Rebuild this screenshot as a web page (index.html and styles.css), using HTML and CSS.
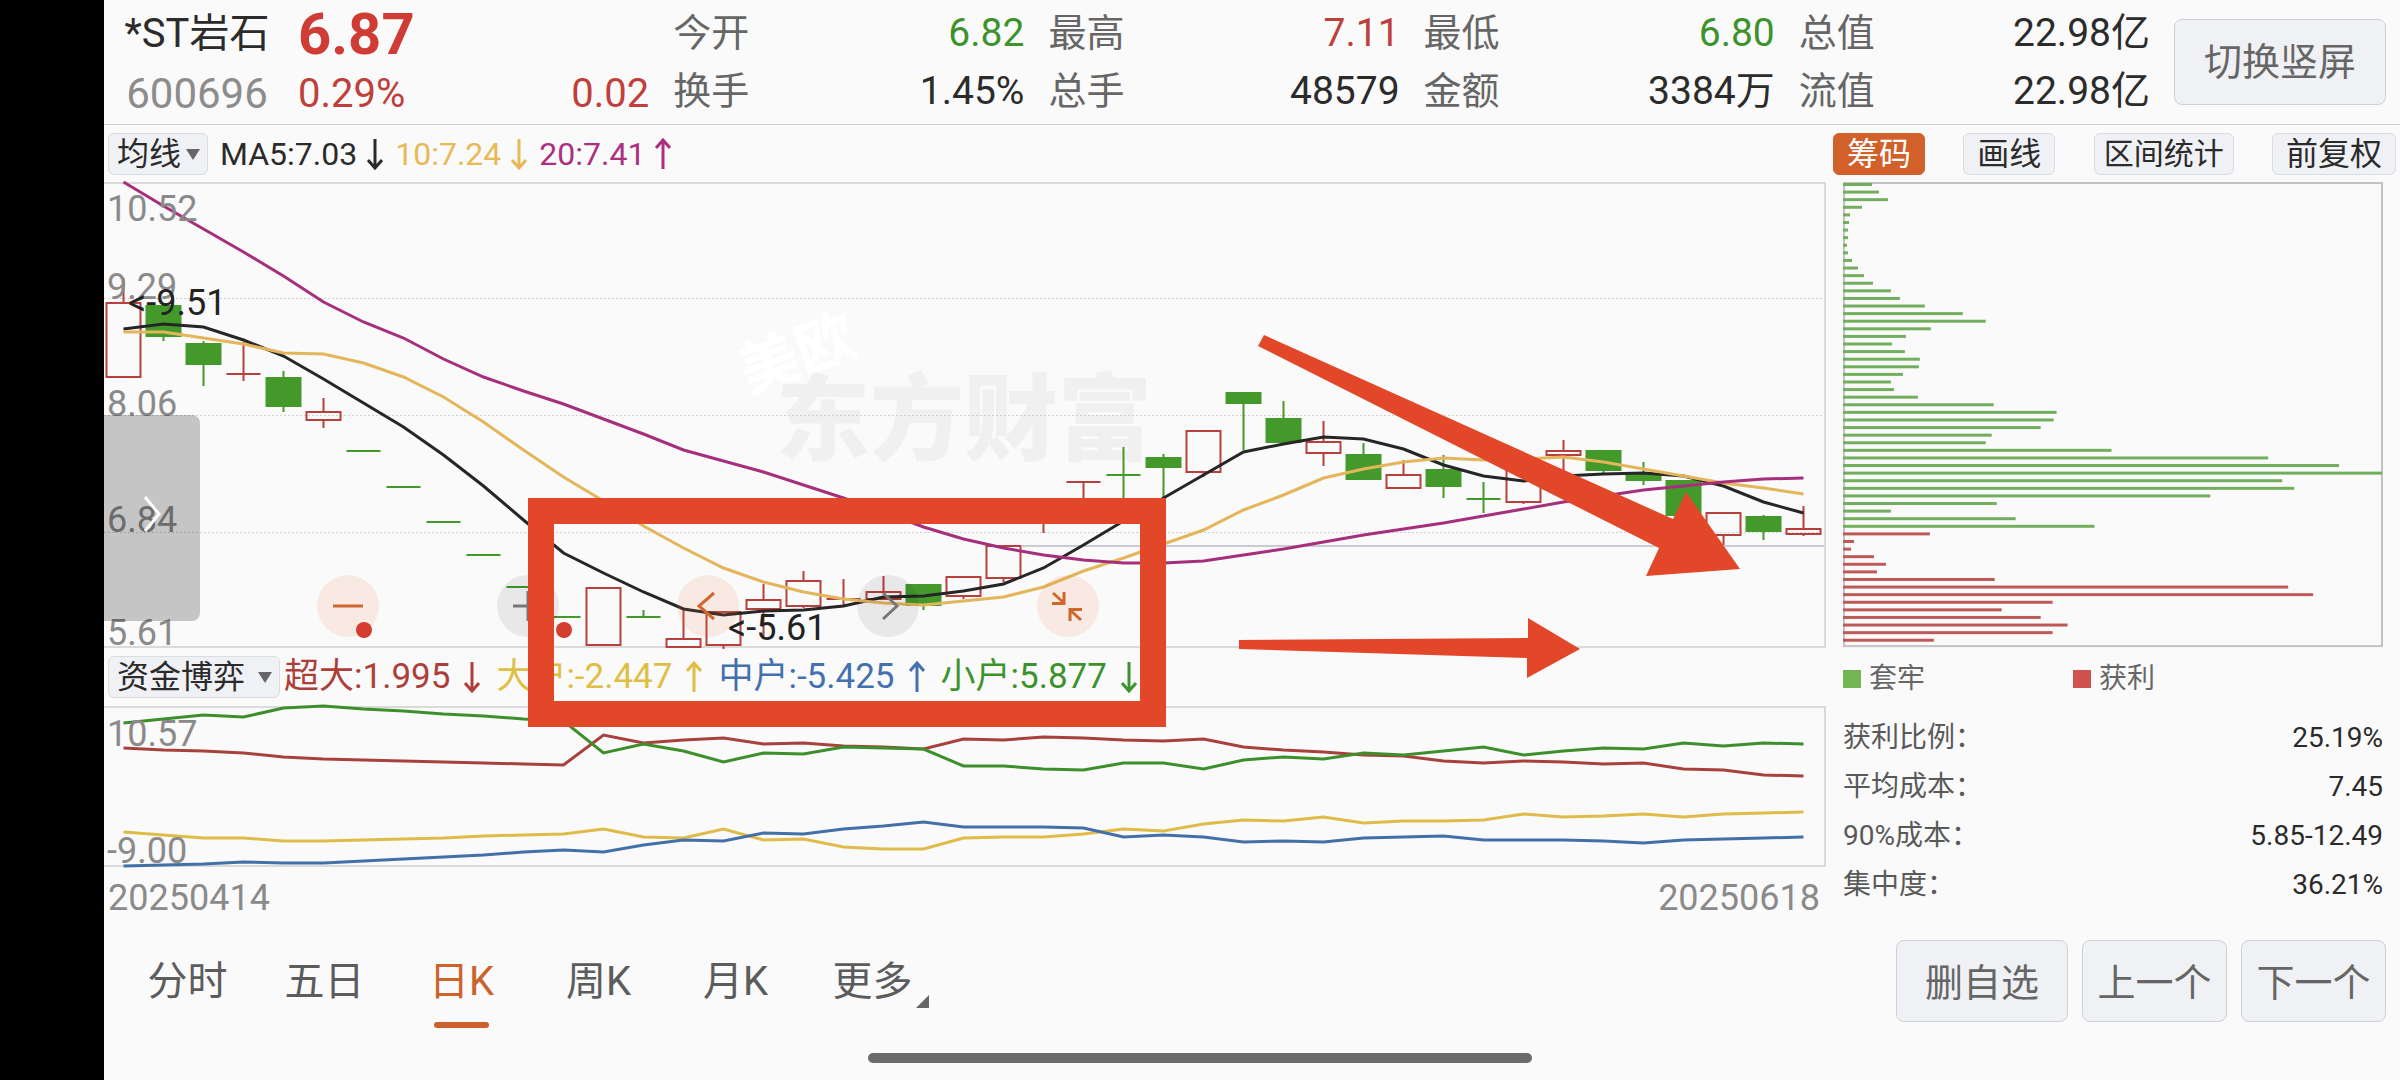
FILE: index.html
```html
<!DOCTYPE html>
<html lang="zh-CN">
<head>
    <meta charset="UTF-8">
    <meta name="viewport" content="width=device-width, initial-scale=1.0">
    <title>*ST岩石 600696</title>
    <link rel="stylesheet" href="styles.css">
</head>
<body>
    <svg class="defs" aria-hidden="true">
        <symbol id="arrow-down" viewBox="0 0 16 32"><path d="M8 1V30M1 22L8 30L15 22"/></symbol>
        <symbol id="arrow-up" viewBox="0 0 16 32"><path d="M8 31V2M1 10L8 2L15 10"/></symbol>
    </svg>

    <div class="notch"></div>
    <main class="screen">
        <header class="quote">
            <div class="stock">
                <h1 class="stock-name">*ST岩石</h1>
                <div class="stock-code">600696</div>
            </div>
            <div class="pair price">
                <strong class="last up">6.87</strong>
                <div class="change up"><span>0.29%</span><span>0.02</span></div>
            </div>
            <dl class="pair">
                <dt>今开</dt><dd class="down">6.82</dd>
                <dt>换手</dt><dd>1.45%</dd>
            </dl>
            <dl class="pair">
                <dt>最高</dt><dd class="up">7.11</dd>
                <dt>总手</dt><dd>48579</dd>
            </dl>
            <dl class="pair">
                <dt>最低</dt><dd class="down">6.80</dd>
                <dt>金额</dt><dd>3384万</dd>
            </dl>
            <dl class="pair">
                <dt>总值</dt><dd>22.98亿</dd>
                <dt>流值</dt><dd>22.98亿</dd>
            </dl>
            <button class="btn btn-rotate">切换竖屏</button>
        </header>

        <div class="content">
            <section class="charts">
                <div class="bar">
                    <span class="picker">
                        <select class="picker-ma" aria-label="主图指标"><option>均线</option></select>
                    </span>
                    <span class="ma ma5">MA5:7.03<svg class="arrow"><use href="#arrow-down"/></svg></span>
                    <span class="ma ma10">10:7.24<svg class="arrow"><use href="#arrow-down"/></svg></span>
                    <span class="ma ma20">20:7.41<svg class="arrow"><use href="#arrow-up"/></svg></span>
                </div>

                <div class="price-chart">
                    <svg class="plot" viewBox="104 182 1722 466">
                        <text class="brand" x="776" y="453">东方财富</text>
                        <text class="stamp" x="748" y="394" transform="rotate(-20 748 394)">美欧</text>
                        <path class="grid" d="M104 298.5H1825M104 415.5H1825M104 532.5H1825"/>
                        <path class="last-line" d="M1022 546H1825"/>
                        <path class="frame" d="M104 183H1825V647H104"/>
                        <g id="candles"></g>
                        <g id="averages"></g>
                        <g class="axis">
                            <text x="107" y="221">10.52</text>
                            <text x="107" y="299">9.29</text>
                            <text x="107" y="416">8.06</text>
                            <text x="107" y="532">6.84</text>
                            <text x="107" y="645">5.61</text>
                        </g>
                        <g class="extreme">
                            <text x="128" y="315">&lt;-9.51</text>
                            <text x="728" y="640">&lt;-5.61</text>
                        </g>
                    </svg>
                    <button class="drawer" aria-label="展开">
                        <svg viewBox="0 0 18 38"><path d="M2 2L16 19L2 36"/></svg>
                    </button>
                    <div class="tools">
                        <button class="tool dot" aria-label="缩小"><svg viewBox="0 0 62 62"><path d="M16 31H46"/></svg></button>
                        <button class="tool grey dot" aria-label="放大"><svg viewBox="0 0 62 62"><path d="M16 31H46M31 16V46"/></svg></button>
                        <button class="tool" aria-label="左移"><svg viewBox="0 0 62 62"><path d="M37 18L22 31L37 44"/></svg></button>
                        <button class="tool grey" aria-label="右移"><svg viewBox="0 0 62 62"><path d="M26 18L40 31L26 44"/></svg></button>
                        <button class="tool" aria-label="收起"><svg viewBox="0 0 62 62"><path d="M16 18L27 28M27 17V28.500H15M44 45L33 35M33 46V34.500H45"/></svg></button>
                    </div>
                </div>

                <div class="bar">
                    <span class="picker">
                        <select class="picker-fund" aria-label="副图指标"><option>资金博弈</option></select>
                    </span>
                    <span class="fund fund-xl">超大:1.995<svg class="arrow"><use href="#arrow-down"/></svg></span>
                    <span class="fund fund-l">大户:-2.447<svg class="arrow"><use href="#arrow-up"/></svg></span>
                    <span class="fund fund-m">中户:-5.425<svg class="arrow"><use href="#arrow-up"/></svg></span>
                    <span class="fund fund-s">小户:5.877<svg class="arrow"><use href="#arrow-down"/></svg></span>
                </div>

                <svg class="plot" viewBox="104 706 1722 161">
                    <path class="frame" d="M104 707H1825V866H104"/>
                    <g id="funds"></g>
                    <g class="axis">
                        <text x="107" y="746">10.57</text>
                        <text x="107" y="863">-9.00</text>
                    </g>
                </svg>

                <div class="dates"><span>20250414</span><span>20250618</span></div>

                <!-- hand-drawn marks over both charts -->
                <svg class="marks" viewBox="104 125 1722 742">
                    <rect x="541" y="511" width="612" height="203"/>
                    <path d="M1264 335L1673 519L1686 492L1740 569L1646 576L1659 548L1258 346Z"/>
                    <path d="M1239 640L1528 638V618L1580 649L1527 678V658L1239 649Z"/>
                </svg>
            </section>

            <aside class="chips">
                <nav class="chip-tabs">
                    <button class="chip-tab active">筹码</button>
                    <button class="chip-tab">画线</button>
                    <button class="chip-tab small">区间统计</button>
                    <button class="chip-tab">前复权</button>
                </nav>
                <div class="chip-body">
                    <svg class="plot" id="chips" viewBox="0 0 541 466">
                        <rect class="chip-frame" x="1" y="1" width="539" height="464"/>
                    </svg>
                    <div class="legend">
                        <span class="trapped">套牢</span>
                        <span class="profit">获利</span>
                    </div>
                    <dl class="stats">
                        <dt>获利比例：</dt><dd>25.19%</dd>
                        <dt>平均成本：</dt><dd>7.45</dd>
                        <dt>90%成本：</dt><dd>5.85-12.49</dd>
                        <dt>集中度：</dt><dd>36.21%</dd>
                    </dl>
                </div>
            </aside>
        </div>

        <footer class="footer">
            <nav class="tabs">
                <button class="tab">分时</button>
                <button class="tab">五日</button>
                <button class="tab active">日K</button>
                <button class="tab">周K</button>
                <button class="tab">月K</button>
                <button class="tab more">更多</button>
            </nav>
            <div class="actions">
                <button class="btn btn-wide">删自选</button>
                <button class="btn">上一个</button>
                <button class="btn">下一个</button>
            </div>
        </footer>
        <div class="home"></div>
    </main>
    <script src="charts.js"></script>
</body>
</html>
```
FILE: styles.css
```css
* {
    box-sizing: border-box;
}

body {
    margin: 0;
    min-height: 100vh;
    display: flex;
    background-color: #fafafa;
    color: #2b2b2b;
    font-family: Roboto, "Noto Sans CJK SC", sans-serif;
    font-size: 38px;
}

button,
select {
    font: inherit;
    color: inherit;
    margin: 0;
    padding: 0;
    border: none;
    background: none;
    cursor: pointer;
}

h1,
dl,
dd {
    margin: 0;
}

.defs {
    position: absolute;
    width: 0;
    height: 0;
}

.notch {
    flex: 0 0 104px;
    background-color: #000;
}

.screen {
    flex: 1;
    min-width: 0;
    display: flex;
    flex-direction: column;
}

.up {
    color: #cf3b35;
}

dd.up,
.change {
    color: #bf403b;
}

.down {
    color: #3d932b;
}

/* quote header */
.quote {
    display: grid;
    grid-template-columns: 170px repeat(5, 1fr) 212px;
    column-gap: 24px;
    align-items: center;
    padding-right: 14px;
    border-bottom: 1px solid #cbd0d6;
    line-height: 58px;
}

.stock,
.price {
    padding-top: 4px;
    line-height: 60px;
}

.stock {
    padding-left: 16px;
    text-align: center;
    white-space: nowrap;
}

.stock-name {
    font-size: 40px;
    font-weight: 400;
}

.stock-code {
    color: #8c8c8c;
    font-size: 42px;
}

.pair {
    display: grid;
    grid-template-columns: auto auto;
    justify-content: space-between;
}

.pair dt {
    color: #666;
}

.pair dd {
    font-size: 39px;
    text-align: right;
}

.pair.price {
    grid-template-columns: 1fr;
    justify-content: stretch;
}

.last {
    font-size: 58px;
}

.change {
    display: flex;
    justify-content: space-between;
    font-size: 40px;
}

.btn {
    height: 82px;
    min-width: 145px;
    padding-bottom: 4px;
    border: 1px solid #cdd1d7;
    border-radius: 8px;
    background-color: #f0f1f5;
    color: #666;
}

.btn-rotate {
    height: 86px;
    padding-bottom: 0;
}

.btn-wide {
    min-width: 172px;
}

/* charts */
.content {
    display: grid;
    grid-template-columns: 3fr 1fr;
}

.charts {
    position: relative;
}

.bar {
    display: flex;
    align-items: center;
    height: 57px;
    padding-left: 4px;
    white-space: nowrap;
}

.price-chart + .bar {
    height: 58px;
}

.picker {
    position: relative;
}

.picker::after {
    content: "";
    position: absolute;
    right: 8px;
    top: 16px;
    border: 7px solid transparent;
    border-top: 11px solid #666;
    border-bottom: 0;
    pointer-events: none;
}

.picker select {
    appearance: none;
    display: block;
    height: 42px;
    padding: 0 8px;
    border: 1px solid #d9dce2;
    border-radius: 6px;
    background-color: #f0f1f5;
    font-size: 32px;
    line-height: 40px;
}

.picker-ma {
    width: 100px;
}

.picker-fund {
    width: 172px;
}

.ma {
    display: flex;
    align-items: center;
    gap: 10px;
    margin-left: 12px;
    font-size: 32px;
}

.fund {
    display: flex;
    align-items: center;
    gap: 14px;
    margin-right: 16px;
    font-size: 35px;
    line-height: 54px;
}

.picker + .fund {
    margin-left: 4px;
}

.arrow {
    width: 16px;
    height: 32px;
    fill: none;
    stroke: currentColor;
    stroke-width: 3;
}

.ma5 { color: #2b2b2b; }
.ma10 { color: #e8b958; }
.ma20 { color: #ac2f80; }
.fund-xl { color: #ad3f3b; }
.fund-l { color: #e0be45; }
.fund-m { color: #4370ae; }
.fund-s { color: #3d932b; }

.plot {
    display: block;
    width: 100%;
    overflow: visible;
}

.price-chart {
    position: relative;
}

.grid {
    stroke: #d0d0d0;
    stroke-dasharray: 2 2;
}

.last-line {
    stroke: #c9cdd3;
    stroke-width: 2;
}

.frame {
    fill: none;
    stroke: #dadada;
    stroke-width: 2;
}

.brand {
    font: 900 94px "Noto Sans CJK SC", sans-serif;
    fill: #f0f0f0;
}

.stamp {
    font: 700 60px "Noto Sans CJK SC", sans-serif;
    fill: #fff;
}

.axis {
    font-size: 36px;
    fill: #8a8a8a;
}

.extreme {
    font-size: 36px;
    fill: #222;
}

.candle-up {
    fill: none;
    stroke: #b8403c;
    stroke-width: 2;
}

.candle-down {
    fill: #439a2b;
    stroke: #439a2b;
    stroke-width: 2;
}

.line {
    fill: none;
    stroke-width: 3;
}

.line-ma5 { stroke: #262626; }
.line-ma10 { stroke: #e3b65c; }
.line-ma20 { stroke: #a62f7c; }
.line-xl { stroke: #a8413d; }
.line-l { stroke: #dfbc4a; }
.line-m { stroke: #4470a8; }
.line-s { stroke: #3d8f2b; }

.drawer {
    position: absolute;
    left: 0;
    top: 50%;
    width: 96px;
    height: 206px;
    border-radius: 0 8px 8px 0;
    background-color: rgba(0, 0, 0, 0.21);
}

.drawer svg {
    width: 18px;
    height: 38px;
    fill: none;
    stroke: #fff;
    stroke-width: 3;
}

.tools {
    position: absolute;
    left: 213px;
    bottom: 11px;
    display: flex;
    gap: 118px;
}

.tool {
    position: relative;
    width: 62px;
    height: 62px;
    border-radius: 50%;
    background-color: rgba(235, 120, 60, 0.12);
    color: #d0672f;
}

.tool.grey {
    background-color: rgba(0, 0, 0, 0.07);
    color: #777;
}

.tool svg {
    display: block;
    fill: none;
    stroke: currentColor;
    stroke-width: 3;
}

.dot::after {
    content: "";
    position: absolute;
    right: 7px;
    bottom: -1px;
    width: 16px;
    height: 16px;
    border-radius: 50%;
    background-color: #d63d31;
}

.tool.grey.dot::after {
    right: -13px;
}

.dates {
    display: flex;
    justify-content: space-between;
    padding: 0 6px 0 4px;
    color: #8a8a8a;
    font-size: 36px;
    line-height: 63px;
}

.marks {
    position: absolute;
    left: 0;
    top: 0;
    width: 100%;
    fill: #e2472a;
    pointer-events: none;
}

.marks rect {
    fill: none;
    stroke: #e2472a;
    stroke-width: 26;
}

/* chip distribution */
.chip-tabs {
    display: flex;
    justify-content: space-between;
    align-items: center;
    height: 57px;
    padding: 0 4px 0 7px;
}

.chip-tab {
    height: 42px;
    padding: 0 13px;
    border: 1px solid #d9dce2;
    border-radius: 6px;
    background-color: #f0f1f5;
    font-size: 32px;
    line-height: 38px;
    white-space: nowrap;
}

.chip-tab.small {
    padding: 0 9px;
    font-size: 30px;
}

.chip-tab.active {
    border-color: #d2602a;
    background-color: #d2602a;
    color: #fff;
}

.chip-body {
    padding: 0 17px;
    font-size: 28px;
}

.chip-frame {
    fill: none;
    stroke: #c2c2c2;
    stroke-width: 2;
}

.chip-green { fill: #72ae5e; }
.chip-red { fill: #bd5a57; }

.legend {
    display: grid;
    grid-template-columns: 230px 1fr;
    line-height: 64px;
    color: #666;
}

.legend span {
    display: flex;
    align-items: center;
    gap: 8px;
}

.legend span::before {
    content: "";
    width: 18px;
    height: 18px;
    background-color: #72b552;
}

.legend .profit::before {
    background-color: #cf524e;
}

.stats {
    display: grid;
    grid-template-columns: auto auto;
    justify-content: space-between;
    padding-top: 2px;
    line-height: 49px;
}

.stats dt {
    color: #595959;
}

.stats dd {
    text-align: right;
}

/* footer */
.footer {
    display: flex;
    justify-content: space-between;
    padding: 10px 14px 0 15px;
}

.tabs {
    display: flex;
}

.tab {
    position: relative;
    width: 137px;
    height: 82px;
    padding-bottom: 6px;
    color: #5c5c5c;
    font-size: 40px;
}

.tab.active {
    color: #cc622b;
}

.tab.active::after {
    content: "";
    position: absolute;
    left: 41px;
    bottom: -6px;
    width: 55px;
    height: 6px;
    border-radius: 3px;
    background-color: #cc622b;
}

.tab.more::after {
    content: "";
    position: absolute;
    right: 12px;
    bottom: 14px;
    border-left: 13px solid transparent;
    border-bottom: 13px solid #666;
}

.actions {
    display: flex;
    gap: 14px;
}

.home {
    width: 664px;
    height: 10px;
    margin: auto 104px 17px 0;
    align-self: center;
    border-radius: 5px;
    background-color: #6b6b6b;
}
```
FILE: charts.js
```js
const NS = 'http://www.w3.org/2000/svg';
const FIRST_X = 123.5;
const STEP = 40;

// direction, body top, body bottom, wick high, wick low
const candles = [
    ['up', 303, 377, 278, 303], ['down', 306, 336, 303, 341], ['down', 344, 364, 341, 386],
    ['up', 374, 374, 342, 381], ['down', 378, 406, 371, 412], ['up', 412, 420, 398, 428],
    ['down', 451, 451, 451, 451], ['down', 487, 487, 487, 487], ['down', 522, 522, 522, 522],
    ['down', 555, 555, 555, 555], ['down', 587, 587, 587, 587], ['down', 617, 617, 617, 617],
    ['up', 588, 645, 588, 645], ['down', 617, 617, 610, 617], ['up', 639, 647, 610, 639],
    ['up', 612, 645, 612, 649], ['up', 600, 609, 584, 637], ['up', 581, 606, 571, 608],
    ['up', 599, 599, 579, 606], ['up', 592, 599, 576, 599], ['down', 585, 605, 585, 610],
    ['up', 577, 596, 577, 599], ['up', 546, 578, 546, 582], ['up', 505, 515, 505, 533],
    ['up', 482, 482, 482, 510], ['down', 475, 475, 447, 510], ['down', 458, 467, 454, 505],
    ['up', 431, 472, 431, 477], ['down', 393, 403, 393, 450], ['down', 419, 442, 401, 442],
    ['up', 442, 453, 421, 466], ['down', 455, 479, 443, 480], ['up', 475, 488, 460, 488],
    ['down', 470, 486, 455, 498], ['down', 499, 499, 482, 513], ['up', 465, 502, 465, 504],
    ['up', 451, 455, 440, 476], ['down', 451, 470, 451, 473], ['down', 474, 480, 462, 485],
    ['down', 481, 515, 481, 515], ['up', 513, 535, 512, 545], ['down', 517, 531, 515, 540],
    ['up', 529, 534, 506, 536]
];

const averages = {
    ma5: [329, 324, 327, 340, 356, 379, 403, 427, 455, 486, 520, 553, 573, 592, 609, 615, 611, 610, 606, 597, 596, 591,
        584, 568, 545, 521, 498, 475, 452, 444, 437, 439, 449, 465, 476, 481, 476, 474, 473, 476, 486, 502, 513],
    ma10: [332, 332, 338, 344, 353, 354, 363, 377, 397, 422, 450, 477, 501, 526, 548, 568, 582, 592, 599, 603, 605, 601,
        597, 587, 571, 558, 544, 530, 510, 495, 478, 469, 462, 458, 460, 459, 457, 462, 469, 476, 483, 488, 494],
    ma20: [182, 206, 229, 252, 276, 302, 322, 338, 359, 377, 391, 404, 419, 434, 450, 461, 472, 485, 498, 512, 527, 539,
        548, 555, 560, 563, 563, 561, 555, 549, 542, 535, 529, 523, 516, 509, 502, 496, 490, 486, 482, 479, 478]
};

const funds = {
    xl: [748, 750, 751, 753, 757, 759, 760, 761, 762, 763, 764, 765, 735, 743, 740, 738, 744, 743, 746, 747, 749, 739,
        740, 737, 738, 740, 741, 739, 747, 750, 752, 755, 756, 761, 763, 761, 762, 764, 763, 769, 770, 775, 776],
    l: [832, 835, 838, 838, 841, 841, 840, 839, 838, 836, 835, 834, 829, 837, 838, 829, 840, 839, 847, 849, 849, 838,
        837, 837, 834, 829, 831, 824, 820, 821, 817, 823, 821, 821, 820, 814, 817, 816, 814, 817, 814, 813, 812],
    m: [866, 865, 864, 862, 863, 863, 861, 859, 857, 855, 852, 850, 852, 845, 840, 841, 833, 834, 829, 826, 822, 827,
        827, 827, 828, 837, 835, 837, 842, 841, 842, 838, 837, 836, 840, 840, 840, 841, 843, 840, 839, 838, 837],
    s: [723, 719, 715, 717, 708, 706, 709, 711, 714, 716, 719, 721, 753, 744, 751, 762, 753, 754, 747, 748, 749, 766,
        766, 769, 770, 763, 763, 769, 760, 757, 759, 753, 755, 751, 747, 755, 751, 748, 749, 743, 746, 743, 744]
};

const chips = [29, 36, 45, 19, 7, 6, 5, 5, 4, 5, 9, 15, 21, 30, 48, 57, 82, 120, 143, 88, 63, 49, 62, 77, 76, 60, 48,
    51, 75, 151, 214, 211, 198, 149, 143, 269, 426, 497, 540, 440, 452, 368, 154, 48, 173, 252,
    87, 11, 8, 31, 43, 34, 152, 446, 471, 210, 159, 198, 225, 210, 91];
const FIRST_PROFIT = 46;

function add(parent, tag, attrs) {
    const el = document.createElementNS(NS, tag);
    for (const key in attrs) {
        el.setAttribute(key, attrs[key]);
    }
    parent.appendChild(el);
}

function drawCandles() {
    const group = document.getElementById('candles');
    candles.forEach(([dir, top, bottom, high, low], i) => {
        const x = FIRST_X + i * STEP;
        const d = `M${x - 17} ${top}H${x + 17}V${bottom}H${x - 17}ZM${x} ${high}V${top}M${x} ${bottom}V${Math.max(low, bottom)}`;
        add(group, 'path', { d: d, class: 'candle-' + dir });
    });
}

function drawLines(id, series) {
    const group = document.getElementById(id);
    for (const name in series) {
        const points = series[name].map((y, i) => `${FIRST_X + i * STEP},${y}`).join(' ');
        add(group, 'polyline', { points: points, class: 'line line-' + name });
    }
}

function drawChips() {
    const svg = document.getElementById('chips');
    chips.forEach((width, i) => {
        add(svg, 'rect', {
            x: 0,
            y: 1 + i * 7.61,
            width: width,
            height: 3,
            class: i < FIRST_PROFIT ? 'chip-green' : 'chip-red'
        });
    });
}

drawCandles();
drawLines('averages', averages);
drawLines('funds', funds);
drawChips();
```
